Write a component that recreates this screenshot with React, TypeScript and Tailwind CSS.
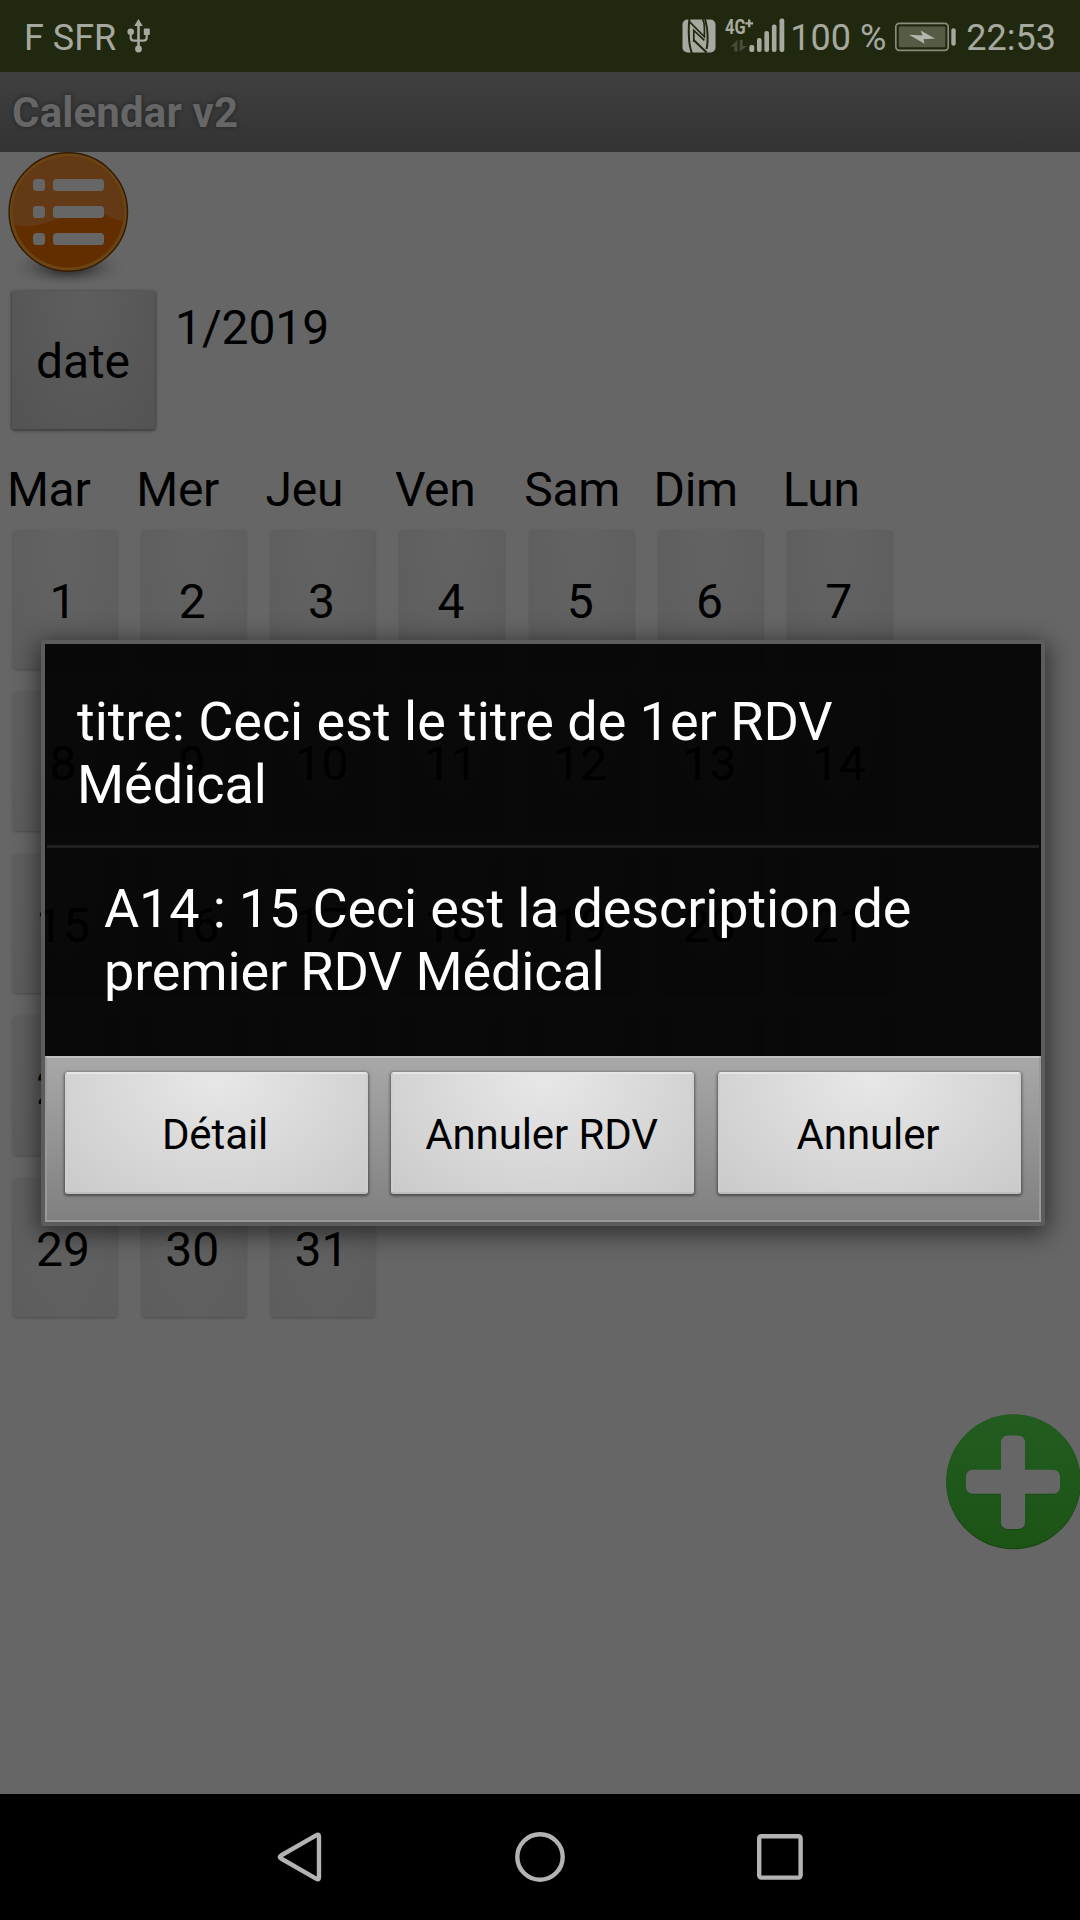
import { useState } from "react";

const WEEKDAYS = ["Mar", "Mer", "Jeu", "Ven", "Sam", "Dim", "Lun"];
const DAYS = Array.from({ length: 31 }, (_, i) => i + 1);

function UsbIcon() {
  return (
    <svg width="24" height="36" viewBox="0 0 24 36" className="ml-[11px] fill-[#a6a99f]">
      <path d="M11.5 1l4.3 7H7.2z" />
      <rect x="10.2" y="6" width="2.6" height="25" />
      <circle cx="3.7" cy="13.8" r="3.3" />
      <rect x="16.8" y="10.5" width="6" height="6.4" rx="0.6" />
      <path
        d="M3.7 15v4.5q0 3.2 3.2 3.2h9.6q3.2 0 3.2-3.2V15"
        fill="none"
        stroke="#a6a99f"
        strokeWidth="2.2"
      />
      <circle cx="11.5" cy="31" r="3.4" />
    </svg>
  );
}

function NfcIcon() {
  return (
    <svg width="34" height="34" viewBox="0 0 34 34">
      <rect x="0.5" y="0.5" width="33" height="33" rx="5" fill="#a6a99f" />
      <g fill="none" stroke="#212810" strokeWidth="2">
        <path d="M7.4 0Q6.4 9 7 19Q7.4 28 10 34" />
        <path d="M23 0Q25.8 9 25.6 18Q25.6 27 24.4 30" />
        <path d="M7.2 2.4L22.4 17.8V9Q22.4 3 20.4 0" strokeWidth="1.7" />
        <path d="M11.8 23V11.4L22.4 21.4" strokeWidth="1.7" />
        <path d="M11.6 21L24.6 33.5" />
      </g>
    </svg>
  );
}

function SignalIcon() {
  return (
    <div className="relative ml-[9px] h-[36px] w-[60px]">
      <span className="absolute left-0 top-[-1px] origin-left scale-x-[0.78] text-[21px] font-bold leading-[21px]">
        4G
      </span>
      <svg width="60" height="36" viewBox="0 0 60 36" className="fill-[#a6a99f]">
        <path d="M23 1.5h2.4v2.7h2.7v2.4h-2.7v2.7H23V6.6h-2.7V4.2H23z" />
        <path d="M12.5 22v11.5H9.3V28.5H5.5zM14.7 22h3v6H22l-7.3 5.5z" fill="#474d38" />
        <rect x="24.3" y="27" width="5" height="7" rx="2" />
        <rect x="32" y="20" width="4.6" height="14" rx="2" />
        <rect x="39.4" y="13" width="4.6" height="21" rx="2" />
        <rect x="46.9" y="6.5" width="4.6" height="27.5" rx="2" />
        <rect x="54.5" y="0.5" width="4.8" height="33.5" rx="2" />
      </svg>
    </div>
  );
}

function BatteryIcon() {
  return (
    <svg width="64" height="32" viewBox="0 0 64 32" className="ml-[8px] mt-px fill-[#a6a99f]">
      <rect x="1.8" y="2.3" width="52.4" height="27" rx="3.5" fill="none" stroke="#878b7a" strokeWidth="1.7" />
      <rect x="4.8" y="5.5" width="46.5" height="20.8" rx="1" fill="#555c45" />
      <path d="M15 13.8L28.6 14.6L26.6 9.6L41 17.4L29.4 18.2L30.6 22.8z" fill="#b4b6ad" />
      <rect x="57.3" y="7.3" width="4.4" height="17.4" rx="2.2" />
    </svg>
  );
}

function StatusBar() {
  return (
    <div className="flex h-[72px] items-center bg-[#212810] pl-[24px] pr-[24px] text-[36px] leading-[42px] text-[#a6a99f]">
      <span className="mt-[3px]">F SFR</span>
      <UsbIcon />
      <div className="ml-auto flex items-center">
        <NfcIcon />
        <SignalIcon />
        <span className="ml-[5px] mt-[3px]">100 %</span>
        <BatteryIcon />
        <span className="ml-[8px] mt-[3px]">22:53</span>
      </div>
    </div>
  );
}

function MenuIcon() {
  return (
    <svg width="130" height="138" viewBox="0 0 130 138" className="block">
      <defs>
        <radialGradient id="shade">
          <stop offset="0.3" stopColor="#333" stopOpacity="0.85" />
          <stop offset="1" stopColor="#666" stopOpacity="0" />
        </radialGradient>
        <clipPath id="disc">
          <circle cx="60.3" cy="60" r="55.5" />
        </clipPath>
      </defs>
      <ellipse cx="60" cy="115" rx="60" ry="21" fill="url(#shade)" />
      <circle cx="60.3" cy="60" r="59.2" fill="#6b4414" stroke="#321a02" strokeWidth="1.4" />
      <circle cx="60.3" cy="60" r="55.5" fill="#622e00" />
      <path clipPath="url(#disc)" d="M0 70Q12 77 30 73Q48 68 58 64Q80 58 98 63Q108 68 113 69L120 66V0H0z" fill="#633a15" />
      <g fill="#666">
        <rect x="25" y="27" width="12" height="12" rx="3.5" />
        <rect x="45" y="27" width="51" height="12" rx="3.5" />
        <rect x="25" y="54" width="12" height="12" rx="3.5" />
        <rect x="45" y="54" width="51" height="12" rx="3.5" />
        <rect x="25" y="81" width="12" height="12" rx="3.5" />
        <rect x="45" y="81" width="51" height="12" rx="3.5" />
      </g>
    </svg>
  );
}

function AddIcon() {
  return (
    <svg width="134" height="136" viewBox="0 0 134 136" className="block">
      <defs>
        <linearGradient id="green" x1="0" y1="0" x2="0" y2="1">
          <stop offset="0" stopColor="#225c20" />
          <stop offset="1" stopColor="#1b5415" />
        </linearGradient>
      </defs>
      <circle cx="67.5" cy="68" r="67.3" fill="#16430f" />
      <circle cx="67.5" cy="67.3" r="67" fill="url(#green)" />
      <g fill="#174a12">
        <rect x="55" y="22" width="24" height="94" rx="6.5" />
        <rect x="20" y="56.5" width="94" height="24" rx="6.5" />
      </g>
      <g fill="#666">
        <rect x="55" y="21.5" width="24" height="93.5" rx="6.5" />
        <rect x="20" y="55.8" width="94" height="24" rx="6.5" />
      </g>
    </svg>
  );
}

function DialogButton({ label, onClick }: { label: string; onClick: () => void }) {
  return (
    <button
      type="button"
      onClick={onClick}
      className="h-[122px] w-[303px] rounded-[3px] border-2 border-b-[#bdbdbd] border-l-[#cfcfcf] border-r-[#cfcfcf] border-t-[#e6e6e6] bg-[radial-gradient(ellipse_at_50%_0%,#e8e8e8_0%,#d9d9d9_50%,#cacaca_100%)] pr-[2px] pt-[3px] text-[42px] leading-[49px] tracking-[-0.1px] text-black shadow-[0_1px_3px_1px_rgba(0,0,0,0.45)]"
    >
      {label}
    </button>
  );
}

function AppointmentDialog({ onClose }: { onClose: () => void }) {
  return (
    <div className="absolute left-[41px] top-[640px] flex h-[586px] w-[1004px] flex-col rounded-[4px] border-4 border-[#5c5c5c] shadow-[0_5px_24px_3px_rgba(0,0,0,0.55)]">
      <div className="flex flex-1 flex-col bg-black/91 text-[54px] leading-[63px] text-white">
        <h2 className="h-[201px] pl-[32px] pr-[160px] pt-[46px] tracking-[-0.03px]">
          titre: Ceci est le titre de 1er RDV Médical
        </h2>
        <div className="mx-[2px] h-[3px] bg-[#202020]" />
        <p className="pl-[59px] pr-[100px] pt-[29px] tracking-[-0.16px]">
          A14 : 15 Ceci est la description de premier RDV Médical
        </p>
      </div>
      <div className="flex h-[166px] justify-between border-2 border-b-[#999] border-l-[#999] border-r-[#999] border-t-[#c0c0c0] bg-linear-to-b from-[#a8a8a8] to-[#808080] pl-[17.5px] pr-[18.5px] pt-[14px]">
        <DialogButton label="Détail" onClick={onClose} />
        <DialogButton label="Annuler RDV" onClick={onClose} />
        <DialogButton label="Annuler" onClick={onClose} />
      </div>
    </div>
  );
}

function NavBar() {
  return (
    <div className="flex h-[126px] items-center justify-center gap-[186px] bg-black">
      <svg width="56" height="56" viewBox="0 0 56 56" fill="none" stroke="#b3b3b3" strokeWidth="4.4" strokeLinejoin="round">
        <path d="M46.5 6.2Q48.8 4.8 49 7.5V48.5Q48.8 51.2 46.5 49.8L11 29.5Q8.6 28 11 26.5z" />
      </svg>
      <svg width="56" height="56" viewBox="0 0 56 56" fill="none" stroke="#b3b3b3" strokeWidth="4.4">
        <circle cx="28" cy="28" r="22.7" />
      </svg>
      <svg width="56" height="56" viewBox="0 0 56 56" fill="none" stroke="#b3b3b3" strokeWidth="4.4">
        <rect x="5.2" y="7.2" width="41.4" height="41.4" rx="2" />
      </svg>
    </div>
  );
}

export default function App() {
  const [open, setOpen] = useState(true);

  return (
    <div className="relative flex h-[1920px] w-[1080px] flex-col overflow-hidden bg-[#666] font-['Roboto',sans-serif] text-black">
      <StatusBar />
      <header className="h-[80px] bg-linear-to-b from-[#404040] to-[#333] pl-[12px] pt-[16px] text-[42px] font-bold leading-[49px] tracking-[0.15px] text-[#666] [text-shadow:0_0_4px_#222]">
        Calendar v2
      </header>

      <main className="flex flex-1 flex-col">
        <div className="h-[139px] pl-[8px]">
          <MenuIcon />
        </div>

        <div className="flex h-[171px] pl-[12px]">
          <button
            type="button"
            className="h-[138px] w-[143px] rounded-[3px] bg-[radial-gradient(ellipse_at_50%_0%,#5e5e5e_0%,#595959_50%,#535353_100%)] pr-px pt-[4px] text-[48px] leading-[56px] tracking-[-0.1px] shadow-[0_1px_3px_1px_rgba(0,0,0,0.4)]"
          >
            date
          </button>
          <span className="ml-[20px] mt-[9px] text-[48px] leading-[56px] tracking-[-0.1px]">1/2019</span>
        </div>

        {/* Calendrier */}
        <div className="grid grid-cols-[repeat(7,129.3px)] pl-[7px] text-[48px] leading-[56px] tracking-[-0.3px]">
          {WEEKDAYS.map((name) => (
            <span key={name} className="h-[68px]">
              {name}
            </span>
          ))}
        </div>
        <div className="grid grid-cols-[repeat(7,129.3px)] gap-y-[23px] pl-[12.5px] text-[48px] leading-[56px]">
          {DAYS.map((day) => (
            <button
              key={day}
              type="button"
              className="h-[139px] w-[104px] rounded-[3px] bg-[radial-gradient(ellipse_at_50%_0%,#636363_0%,#606060_50%,#5d5d5d_100%)] pr-[3px] pt-[4px] shadow-[0_1px_3px_0_rgba(0,0,0,0.25)]"
            >
              {day}
            </button>
          ))}
        </div>

        <div className="mt-[97px] flex justify-end">
          <AddIcon />
        </div>
      </main>

      <NavBar />

      {open && <AppointmentDialog onClose={() => setOpen(false)} />}
    </div>
  );
}
